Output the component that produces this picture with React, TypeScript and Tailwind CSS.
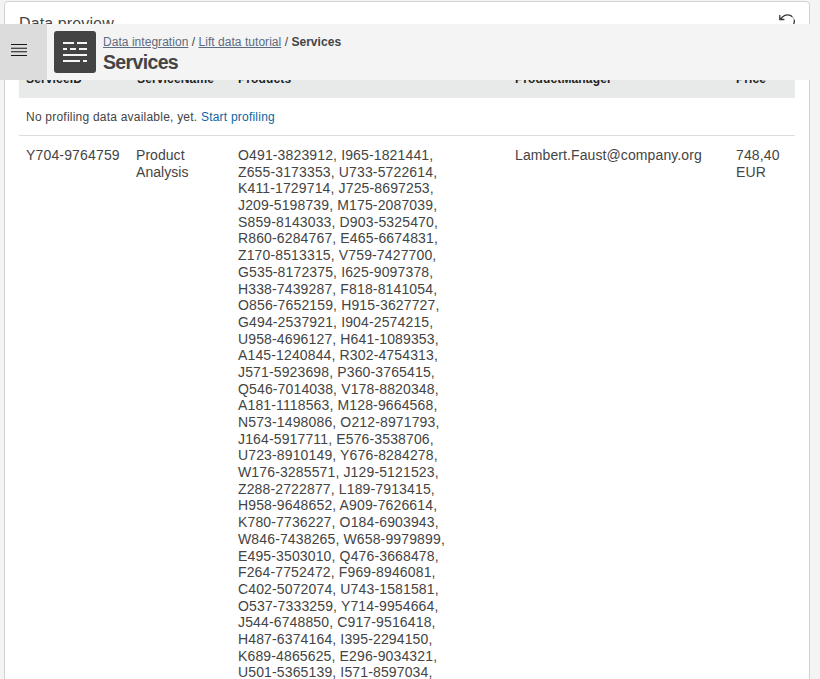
const products = [
  "O491-3823912, I965-1821441,", "Z655-3173353, U733-5722614,", "K411-1729714, J725-8697253,",
  "J209-5198739, M175-2087039,", "S859-8143033, D903-5325470,", "R860-6284767, E465-6674831,",
  "Z170-8513315, V759-7427700,", "G535-8172375, I625-9097378,", "H338-7439287, F818-8141054,",
  "O856-7652159, H915-3627727,", "G494-2537921, I904-2574215,", "U958-4696127, H641-1089353,",
  "A145-1240844, R302-4754313,", "J571-5923698, P360-3765415,", "Q546-7014038, V178-8820348,",
  "A181-1118563, M128-9664568,", "N573-1498086, O212-8971793,", "J164-5917711, E576-3538706,",
  "U723-8910149, Y676-8284278,", "W176-3285571, J129-5121523,", "Z288-2722877, L189-7913415,",
  "H958-9648652, A909-7626614,", "K780-7736227, O184-6903943,", "W846-7438265, W658-9979899,",
  "E495-3503010, Q476-3668478,", "F264-7752472, F969-8946081,", "C402-5072074, U743-1581581,",
  "O537-7333259, Y714-9954664,", "J544-6748850, C917-9516418,", "H487-6374164, I395-2294150,",
  "K689-4865625, E296-9034321,", "U501-5365139, I571-8597034,",
];

function MenuIcon() {
  return (
    <svg width="16" height="12" viewBox="0 0 16 12" shapeRendering="crispEdges">
      <path d="M0 0h16v1H0zM0 11h16v1H0z" fill="#161616" />
      <path d="M0 4h16v1H0zM0 7h16v1H0z" fill="#4a4a4a" />
      <path d="M0 3h16v1H0zM0 8h16v1H0z" fill="#a8a8a8" />
    </svg>
  );
}

function DatasetIcon() {
  return (
    <svg width="42" height="42" viewBox="0 0 42 42" shapeRendering="crispEdges">
      <path
        d="M9 11h11v2H9zM23 11h10v2H23zM9 17h4v2H9zM16 17h6v2H16zM25 17h8v2H25zM9 23h24v2H9zM9 29h17v2H9zM29 29h4v2H29z"
        fill="#f5f5f5"
      />
    </svg>
  );
}

function ReloadIcon() {
  return (
    <svg width="16" height="16" viewBox="0 0 16 16" fill="none" stroke="#393939">
      <path d="M.8 1v4.5h4.6M1.2 5.2 4 2.6C5 1.4 6.6.8 8.4.8c2.2 0 3.8.7 5 2" strokeWidth="1.3" />
      <path d="M13.6 3c.6.7 1 1.4 1.3 2.2" strokeWidth="0.5" />
      <path d="M15.2 5.6c.5 2.5-.4 5.5-2.6 7.4" strokeWidth="1.3" />
    </svg>
  );
}

function Header() {
  return (
    <header className="absolute inset-x-0 top-6 flex h-14 bg-[#f4f4f4]">
      <div className="flex w-[47px] items-start bg-[#dcdcdc] pt-5 pl-[11px]">
        <MenuIcon />
      </div>
      <div className="mt-[7px] ml-[7px] size-[42px] rounded-[3px] bg-[#444]">
        <DatasetIcon />
      </div>
      <div className="ml-[7px] pt-[10px]">
        <nav className="text-[12px] leading-4 tracking-[0.04px] whitespace-nowrap text-[#444]">
          <a className="text-[#5d6b82] underline underline-offset-1">Data integration</a>
          {" / "}
          <a className="text-[#5d6b82] underline underline-offset-1">Lift data tutorial</a>
          {" / "}
          <b>Services</b>
        </nav>
        <h1 className="text-[19.5px] leading-6 font-bold tracking-[-0.65px] text-[#444]">Services</h1>
      </div>
    </header>
  );
}

export default function App() {
  return (
    <div className="relative h-[679px] overflow-hidden bg-[#f4f4f4] font-['Liberation_Sans',Arial,sans-serif] text-[#444]">
      <main className="mt-px mr-[10px] ml-1 h-[700px] rounded-t-[4px] border border-[#d2d2d2] bg-white px-[14px]">
        <div className="flex h-[62px] items-start justify-between pt-3">
          <h2 className="text-[16px] leading-5 tracking-[0.12px]">Data preview</h2>
          <ReloadIcon />
        </div>
        <div className="grid h-[34px] grid-cols-[110px_102px_277px_221px_1fr] bg-[#e8eae9] pt-[7px] pl-[7px] text-[12px] leading-4 font-bold tracking-[0.15px] text-[#222]">
          <span>ServiceID</span>
          <span className="pl-px">ServiceName</span>
          <span>Products</span>
          <span>ProductManager</span>
          <span>Price</span>
        </div>
        <div className="h-[38px] border-b border-[#dcdcdc] pt-[11px] pl-[7px] text-[12px] leading-4 tracking-[0.22px]">
          No profiling data available, yet. <a className="text-[#0a67a3]">Start profiling</a>
        </div>
        <div className="grid grid-cols-[110px_102px_277px_221px_1fr] pt-[11px] pl-[7px] text-[14px] leading-[16.68px] tracking-[0.14px]">
          <span className="tracking-[0.16px]">Y704-9764759</span>
          <span className="tracking-[0.05px]">
            Product
            <br />
            Analysis
          </span>
          <div className="whitespace-nowrap">
            {products.map((line) => (
              <div key={line}>{line}</div>
            ))}
          </div>
          <span className="tracking-[0.1px]">Lambert.Faust@company.org</span>
          <span>
            748,40
            <br />
            EUR
          </span>
        </div>
      </main>
      <Header />
    </div>
  );
}
